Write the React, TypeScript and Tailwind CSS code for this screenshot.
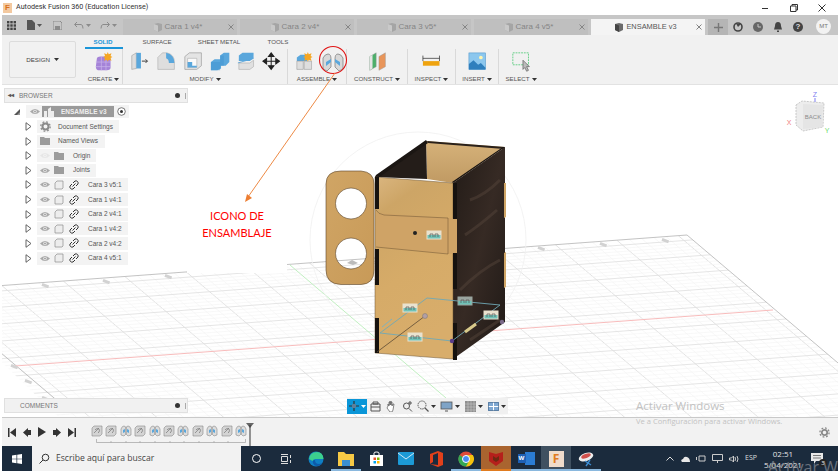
import React from "react";

const F = { fontFamily: '"Liberation Sans", Arial, sans-serif' };

function Caret({ c = "#333" }: { c?: string }) {
  return <svg width="5" height="3" viewBox="0 0 5 3" className="ml-[2px] inline-block"><path d="M0 0h5L2.500 3z" fill={c} /></svg>;
}

function Grid() {
  const lines: React.ReactNode[] = [];
  const m = 0.85;
  const s = -0.0738;
  for (let k = 0; k < 70; k++) {
    const x0 = -72 + 12.3 * k;
    const y0 = 291 + s * (x0 + 72);
    const major = (k - 1) % 5 === 0;
    lines.push(<line key={"b" + k} x1={x0} y1={y0} x2={x0 + 460} y2={y0 + 460 * m} stroke={major ? "#dcdcdc" : "#f3f3f3"} strokeWidth={major ? 0.8 : 0.6} />);
  }
  let y = 291;
  let step = 3.2;
  for (let k = 0; k < 70; k++) {
    const major = k % 5 === 0;
    lines.push(<line key={"a" + k} x1={-80} y1={y + 8 * 0.738} x2={1200} y2={y + 1200 * s} stroke={major ? "#dedede" : "#f3f3f3"} strokeWidth={major ? 0.8 : 0.6} />);
    y += step;
    step *= 1.006;
  }
  return (
    <g>
      <defs>
        <clipPath id="floor"><polygon points="-72,291 687,235 1100,585 300,650" /></clipPath>
      </defs>
      <g clipPath="url(#floor)">{lines}</g>
      <polyline points="-72,291 687,235 1100,585" fill="none" stroke="#b4b4b4" strokeWidth="0.8" />
      <line x1="-72" y1="291" x2="60" y2="403" stroke="#b4b4b4" strokeWidth="0.8" />
      <line x1="15" y1="366" x2="773" y2="310" stroke="#f8bcbc" strokeWidth="1" />
      <line x1="290" y1="265" x2="446" y2="398" stroke="#c2f0c2" strokeWidth="1" />
      {[[45, 285], [106, 281], [168, 276], [541, 248], [603, 244], [665, 240], [28, 381], [14, 366], [45, 398]].map(([x, yy], i) => (
        <rect key={i} x={x - 3} y={yy - 1} width="7" height="3" fill="#d2d2d2" transform={`rotate(20 ${x} ${yy})`} />
      ))}
    </g>
  );
}

function Label({ x, y, w = 15, dark = false }: { x: number; y: number; w?: number; dark?: boolean }) {
  return (
    <g>
      <rect x={x - w / 2} y={y - 4.500} width={w} height="9" fill={dark ? "#9aa59f" : "#e9e2cf"} />
      <rect x={x - w / 2 + 1} y={y} width={w - 2} height="3.500" fill="#6fc2b7" />
      <path d={`M${x - 4} ${y + 2}v-3h3v3M${x + 1} ${y + 2}v-3h3v3`} fill="none" stroke="#555" strokeWidth="0.700" />
    </g>
  );
}

function Model() {
  return (
    <g>
      <defs>
        <linearGradient id="wood" x1="0" y1="0" x2="0.300" y2="1">
          <stop offset="0" stopColor="#dab680" />
          <stop offset="0.200" stopColor="#cda566" />
          <stop offset="0.600" stopColor="#d6ab68" />
          <stop offset="1" stopColor="#d8ad6b" />
        </linearGradient>
        <linearGradient id="woodb" x1="0" y1="0" x2="0" y2="1">
          <stop offset="0" stopColor="#d6b27a" />
          <stop offset="1" stopColor="#c09a63" />
        </linearGradient>
        <linearGradient id="hand" x1="0" y1="0" x2="1" y2="1">
          <stop offset="0" stopColor="#d0a565" />
          <stop offset="1" stopColor="#c89a58" />
        </linearGradient>
        <linearGradient id="dark" x1="0" y1="0" x2="1" y2="1">
          <stop offset="0" stopColor="#221b17" />
          <stop offset="0.500" stopColor="#362a24" />
          <stop offset="1" stopColor="#1f1916" />
        </linearGradient>
      </defs>
      <circle cx="418" cy="240" r="108" fill="none" stroke="#f0f0f0" strokeWidth="0.800" />
      <path fillRule="evenodd" fill="url(#hand)" stroke="#5b452b" strokeWidth="0.600" d="M341 171h20q13 1 13 13v86q0 14-13 14.500h-20q-15-.5-15-14.500v-86q0-13 15-13zM351 188a15.500 15.500 0 1 0 .01 0zM351 238a15.500 15.500 0 1 0 .01 0z" />
      <path d="M352 260l6 3-5 2-6-2z" fill="#bbb" />
      <polygon points="426,141 505,147 453,183 427,179" fill="url(#woodb)" />
      <polygon points="375,177 426,141 427,179" fill="#241d19" />
      <polygon points="427,141 505,147 504,149 428,143" fill="#2a211b" />
      <polygon points="375,177 376,175 426,140 428,143 378,178" fill="#1b1613" />
      <polygon points="453,183 505,147 503,147 452,182" fill="#1b1613" />
      <polygon points="453,183 505,147 505,322 453,359" fill="url(#dark)" />
      <path d="M465 235q15-10 32-25M460 290q20-20 40-30M470 200q15-5 30-20M470 340q12-8 30-20" fill="none" stroke="#54443a" strokeWidth="3" opacity="0.5" />
      <polygon points="504,183 506,183 506,217 504,218" fill="#cfa566" />
      <polygon points="504,253 506,252 506,287 504,288" fill="#cfa566" />
      <polygon points="375,177 453,183 453,359 375,353" fill="url(#wood)" stroke="#6a5233" strokeWidth="0.500" />
      <polygon points="376,213 448,218 457,219 457,253 448,254 376,247" fill="#cfa366" />
      <path d="M376 210q2 4 8 5l64 3v36l-72-7" fill="none" stroke="#6b5232" strokeWidth="0.500" />
      <rect x="375" y="177" width="4" height="32" fill="#16120f" />
      <rect x="375" y="249" width="4" height="36" fill="#16120f" />
      <rect x="375" y="318" width="4" height="35" fill="#16120f" />
      <rect x="453" y="183" width="4" height="36" fill="#16120f" />
      <rect x="453" y="253" width="4" height="36" fill="#16120f" />
      <rect x="453" y="323" width="4" height="37" fill="#16120f" />
      <circle cx="415" cy="233" r="2" fill="#222" />
      <polygon points="380,333 427,298 500,305 452,341" fill="none" stroke="#6fa8b5" strokeWidth="0.900" />
      <line x1="377" y1="352" x2="425" y2="316" stroke="#5d4a33" strokeWidth="0.800" />
      <circle cx="425" cy="316" r="2.500" fill="#b39fa5" stroke="#777" strokeWidth="0.500" />
      <circle cx="452" cy="341" r="2.200" fill="#5a3d8a" />
      <circle cx="502" cy="322" r="2.200" fill="#7b6a8a" />
      <line x1="465" y1="332" x2="476" y2="324" stroke="#d8c98a" strokeWidth="3" />
      <Label x={434} y={235} />
      <Label x={410} y={308} />
      <Label x={415} y={337} />
      <Label x={465} y={301} dark />
      <Label x={491} y={315} />
      <line x1="382" y1="327" x2="392" y2="319" stroke="#7fb2bd" strokeWidth="1" />
    </g>
  );
}

function ViewCube() {
  return (
    <g>
      <polygon points="796,105 802,101 824,103 823,127 803,131 796,125" fill="#ededed" stroke="#bdbdbd" strokeDasharray="2 1" strokeWidth="0.800" />
      <polygon points="803,104 823,105 822,127 803,129" fill="#e5e5e5" />
      <text x="813" y="119" textAnchor="middle" fontSize="6" fill="#8b8b8b" style={F}>BACK</text>
      <line x1="815" y1="102" x2="815" y2="98" stroke="#7f7ff0" />
      <text x="815" y="97" textAnchor="middle" fontSize="7" fill="#7f7ff0" style={F}>Z</text>
      <text x="789" y="125" textAnchor="middle" fontSize="7" fill="#f08080" style={F}>X</text>
      <text x="827" y="133" textAnchor="middle" fontSize="7" fill="#6fdc6f" style={F}>Y</text>
    </g>
  );
}

const I = ({ w = 22, h = 22, children }: { w?: number; h?: number; children: React.ReactNode }) => (
  <svg width={w * 0.92} height={h * 0.92} viewBox={`0 0 ${w} ${h}`}>{children}</svg>
);
const B = "#5aa7dc";
const GR = "#dedede";

function JointIcon({ w = 26 }: { w?: number }) {
  return (
    <svg width={w} height="22" viewBox="0 0 26 22">
      <path d="M3 18V7q2-4 5-4t3 5v8l-4 4z" fill="#d8d8d8" stroke="#777" strokeWidth="0.700" />
      <path d="M23 18V7q-2-4-5-4t-3 5v8l4 4z" fill="#d8d8d8" stroke="#777" strokeWidth="0.700" />
      <path d="M6 15v-4l5-3v3zM20 15v-4l-5-3v3z" fill={B} />
    </svg>
  );
}

function Group({ label, w, children, sep = true, gap = "gap-[7px]", pad = "" }: { label: string; w: number; children: React.ReactNode; sep?: boolean; gap?: string; pad?: string }) {
  return (
    <div className={`flex flex-col items-center h-[35px] ${sep ? "border-r border-[#d9d9d9]" : ""}`} style={{ width: w }}>
      <div className={`flex items-center justify-center h-[25px] ${gap} ${pad}`}>{children}</div>
      <div className="text-[6.2px] leading-[10px] text-[#555] whitespace-nowrap">{label}<Caret /></div>
    </div>
  );
}

function Ribbon() {
  return (
    <div className="ml-[2px] mr-[2px] h-[50px] bg-[#f1f1f1] border-b border-[#e2e2e2] flex" style={F}>
      <div className="w-[83px] h-full flex items-center pl-[7px] pt-[6px] pb-[6px]">
        <div className="w-[67px] h-[37px] rounded-[2px] border border-[#dcdcdc] flex items-center justify-center text-[6.2px] text-[#444]">DESIGN&nbsp;<Caret /></div>
      </div>
      <div className="flex flex-col">
        <div className="flex h-[15px] text-[6.2px] text-[#555] text-center leading-[13px]">
          <div className="w-[38px] text-[#1b95d8] font-bold border-b-2 border-[#1b95d8] h-[14px] pr-[2px]">SOLID</div>
          <div className="w-[68px]">SURFACE</div>
          <div className="w-[56px]">SHEET METAL</div>
          <div className="w-[62px]">TOOLS</div>
        </div>
        <div className="flex items-start">
          <Group label="CREATE" w={38}>
            <I w={20}>
              <path d="M3 9q0-3 4-3h8q3 0 3 4v8q0 3-4 3H6q-4 0-4-4z" fill="#a583d8" />
              <path d="M8 6v15M13 6v15M2 12h16M2 17h16" stroke="#c9b4ea" strokeWidth="0.800" />
              <path d="M15 1l1 2.500 3-1-1 3 2 1-2 1 1 3-3-1-1 2-1-2-3 1 1-3-2-1 2-1-1-3 3 1z" fill="#f5a623" />
            </I>
          </Group>
          <Group label="MODIFY" w={165} gap="gap-[6.7px]">
            <I>
              <path d="M3 5l5-3v17l-5 1z" fill={GR} stroke="#888" strokeWidth="0.500" /><path d="M8 2h5v17H8z" fill={B} /><path d="M14 11h6M18 9l2 2-2 2" stroke="#333" fill="none" />
            </I>
            <I>
              <path d="M2 20V7l5-5h5q8 2 8 10v8z" fill={GR} stroke="#999" strokeWidth="0.500" /><path d="M11 2q9 2 9 11h-6q0-4-3-5z" fill={B} />
            </I>
            <I>
              <path d="M2 6l5-4h13v14l-5 4H2z" fill="#e4e4e4" stroke="#888" strokeWidth="0.600" /><path d="M5 8h10v10H5z" fill="#fafafa" stroke="#999" strokeWidth="0.500" /><path d="M5 12h5v4h5v2H5z" fill={B} />
            </I>
            <I>
              <path d="M1 12l4-3h6V5l4-3h6v10l-4 4h-5v3l-4 2H1z" fill={B} /><path d="M1 12h10v9H1zM11 5h4v11h-4z" fill="#3f93cf" opacity="0.500" />
            </I>
            <I w={20}>
              <path d="M2 5l4-3h12v6l-4 3H2z" fill={B} /><path d="M1 13l17-5" stroke="#5aa7dc" /><path d="M2 13h12l4-3v7l-4 3H2z" fill="#e0e0e0" stroke="#999" strokeWidth="0.500" />
            </I>
            <I w={20} h={20}>
              <path d="M10 1v18M1 10h18M10 1L7 5h6zM10 19l-3-4h6zM1 10l4-3v6zM19 10l-4-3v6z" stroke="#222" strokeWidth="1.100" fill="#222" />
            </I>
          </Group>
          <Group label="ASSEMBLE" w={59} gap="gap-[6px]" pad="pl-[7px]">
            <I w={20}>
              <path d="M2 7l4-3h7v7H2z" fill={B} /><path d="M2 11h7v9H2zM10 11h8v9h-8z" fill={GR} stroke="#888" strokeWidth="0.500" />
              <path d="M14 1l1 2.500 3-1-1 3 2 1-2 1 1 3-3-1-1 2-1-2-3 1 1-3-2-1 2-1-1-3 3 1z" fill="#f5a623" />
            </I>
            <JointIcon />
          </Group>
          <Group label="CONSTRUCT" w={61}>
            <I w={22}>
              <path d="M3 6l7-4v15l-7 4z" fill="#4caf6a" stroke="#999" strokeWidth="0.500" /><path d="M13 6l7-4v15l-7 4z" fill="#e8955a" stroke="#999" strokeWidth="0.500" />
              <path d="M3 6l3-2v15l-3 2z" fill="#e5e5e5" />
            </I>
          </Group>
          <Group label="INSPECT" w={48}>
            <I w={20}>
              <path d="M1 5v6M19 5v6M1 8h18" stroke="#333" strokeWidth="0.800" /><rect x="1" y="11" width="18" height="5" fill="#efa30f" />
            </I>
          </Group>
          <Group label="INSERT" w={43}>
            <I w={20} h={20}>
              <rect x="1" y="1" width="18" height="18" fill="#8cc7ee" stroke="#4c93c9" strokeWidth="0.600" /><circle cx="14" cy="6" r="2" fill="#fff6b0" /><path d="M1 19v-6l5-4 5 5 3-2 5 5v2z" fill="#2f7fbd" />
            </I>
          </Group>
          <Group label="SELECT" w={44} sep={false}>
            <I w={22}>
              <rect x="2" y="2" width="17" height="13" fill="none" stroke="#5fce83" strokeDasharray="2 1" /><path d="M13 10v10l2-2 2 4 2-1-2-4h3z" fill="#bbb" stroke="#555" strokeWidth="0.700" />
            </I>
          </Group>
        </div>
      </div>
    </div>
  );
}

function Tab({ name, active = false }: { name: string; active?: boolean }) {
  return (
    <div className={`w-[114px] h-[16px] flex items-center pr-[3px] ${active ? "bg-[#f4f4f4] text-[#555] text-[7.4px]" : "bg-[#bfbfbf] text-[#858585] text-[8px]"}`}>
      <div className="flex-1 flex items-center justify-center gap-[2px] pl-[4px]">
        <svg width="10" height="10" viewBox="0 0 10 10"><path d="M1 2l4-1 4 1v6l-4 2-4-2z" fill={active ? "#6b6b6b" : "#a5a5a5"} /><path d="M1 2l4 1.500V10L1 8z" fill={active ? "#444" : "#c9c9c9"} /></svg>
        <span>{name}</span>
      </div>
      <svg width="6" height="6" viewBox="0 0 6 6"><path d="M.5.5l5 5M5.500.5l-5 5" stroke={active ? "#666" : "#777"} strokeWidth="0.800" /></svg>
    </div>
  );
}

function TabBar() {
  return (
    <div className="ml-[2px] mr-[2px] h-[20px] bg-[#c6c6c6] flex items-end" style={F}>
      <div className="w-[121px] h-full flex items-center pl-[5px]">
        <svg width="9" height="9" viewBox="0 0 9 9" className="mr-[11px]">{[0, 3.300, 6.600].flatMap((x) => [0, 3.300, 6.600].map((y) => <rect key={`${x}${y}`} x={x} y={y} width="2.400" height="2.400" fill="#444" />))}</svg>
        <svg width="8" height="10" viewBox="0 0 8 10"><path d="M0 0h5l3 3v7H0z" fill="#555" /></svg>
        <Caret c="#555" />
        <svg width="9" height="9" viewBox="0 0 9 9" className="ml-[11px]"><path d="M0 0h7l2 2v7H0z" fill="none" stroke="#8b8b8b" /><rect x="2" y="5" width="5" height="4" fill="#8b8b8b" /></svg>
        <svg width="10" height="8" viewBox="0 0 10 8" className="ml-[12px]"><path d="M3 1L.5 3.500 3 6M1 3.500h6q2 0 2 4" fill="none" stroke="#8b8b8b" /></svg>
        <Caret c="#8b8b8b" />
        <svg width="10" height="8" viewBox="0 0 10 8" className="ml-[9px]"><path d="M7 1l2.500 2.500L7 6M9 3.500H3q-2 0-2 4" fill="none" stroke="#8b8b8b" /></svg>
        <Caret c="#8b8b8b" />
      </div>
      <div className="flex gap-[3px]">
        <Tab name="Cara 1 v4*" />
        <Tab name="Cara 2 v4*" />
        <Tab name="Cara 3 v5*" />
        <Tab name="Cara 4 v5*" />
        <Tab name="ENSAMBLE v3" active />
      </div>
      <div className="ml-[3px] w-[20px] h-[16px] bg-[#b5b5b5] flex items-center justify-center">
        <svg width="9" height="9" viewBox="0 0 9 9"><path d="M4.500 0v9M0 4.500h9" stroke="#777" strokeWidth="1.400" /></svg>
      </div>
      <div className="h-[17px] flex items-center gap-[10px] pl-[5px]">
        <svg width="10" height="10" viewBox="0 0 10 10"><circle cx="5" cy="5" r="4" fill="none" stroke="#444" strokeWidth="1.600" /><path d="M3 1.500L5 5l3-3z" fill="#444" /></svg>
        <svg width="10" height="10" viewBox="0 0 10 10"><circle cx="5" cy="5" r="5" fill="#666" /><path d="M5 2v3h3" stroke="#c6c6c6" fill="none" /></svg>
        <svg width="10" height="10" viewBox="0 0 10 10"><path d="M5 0q3 0 3 4l1 3.500H1L2 4q0-4 3-4zM4 8.500h2V10H4z" fill="#444" /></svg>
        <div className="w-[10px] h-[10px] rounded-full bg-[#444] text-[#ddd] text-[8px] leading-[10px] text-center font-bold">?</div>
      </div>
      <div className="h-[17px] flex items-center pl-[13px]">
        <div className="w-[15px] h-[15px] rounded-full bg-[#f2f2f2] text-[6px] leading-[15px] text-center text-[#777]">MT</div>
      </div>
    </div>
  );
}

const Eye = ({ off = false }: { off?: boolean }) => (
  <svg width="10" height="7" viewBox="0 0 10 7">
    <path d="M0 3.500Q5-1.500 10 3.500 5 8.500 0 3.500z" fill={off ? "#e6e6e6" : "#a9a9a9"} />
    <circle cx="5" cy="3.500" r="1.700" fill={off ? "#f5f5f5" : "#efefef"} />
    <circle cx="5" cy="3.500" r="0.900" fill={off ? "#e6e6e6" : "#999"} />
  </svg>
);
const Folder = () => (
  <svg width="10" height="8" viewBox="0 0 10 8"><path d="M0 0h4l1 1h5v7H0z" fill="#9c9c9c" /></svg>
);
const Tri = () => (
  <svg width="7" height="9" viewBox="0 0 7 9" className="shrink-0"><path d="M1 .700L6 4.500 1 8.300z" fill="#fff" stroke="#555" strokeWidth="0.900" /></svg>
);
const CompBox = () => (
  <svg width="10" height="10" viewBox="0 0 10 10"><path d="M1 3l2-2h6v7l-1 1H1z" fill="#ededed" stroke="#8d8d8d" strokeWidth="0.700" /></svg>
);
const LinkI = () => (
  <svg width="10" height="10" viewBox="0 0 10 10" fill="none" stroke="#333" strokeWidth="1"><path d="M4 3l2-2q1.500-.5 2.500.5T9 4L7 6" /><path d="M6 7L4 9q-1.500.5-2.500-.5T1 6l2-2" /><path d="M3.500 6.500l3-3" /></svg>
);

function Comp({ name }: { name: string }) {
  return (
    <div className="h-[14.64px] flex items-center pl-[21px]">
      <Tri />
      <div className="ml-[5px] w-[91px] h-[13px] bg-[#f3f3f3] flex items-center pl-[2px]">
        <span className="ml-[1px]"><Eye /></span>
        <span className="ml-[4px] flex"><CompBox /></span>
        <span className="ml-[5px] flex"><LinkI /></span>
        <span className="ml-[9px] text-[6.5px] text-[#555] whitespace-nowrap">{name}</span>
      </div>
    </div>
  );
}

function Named({ w, name, icon, tx }: { w: number; name: string; icon: React.ReactNode; tx: number }) {
  return (
    <div className="h-[14.64px] flex items-center pl-[21px]">
      <Tri />
      <div className="ml-[5px] h-[13px] bg-[#f3f3f3] flex items-center text-[6.5px] text-[#555] whitespace-nowrap" style={{ width: w }}>
        <div className="flex items-center pl-[3px]" style={{ width: tx }}>{icon}</div>
        <span>{name}</span>
      </div>
    </div>
  );
}

function Browser() {
  return (
    <div className="absolute left-[2px] top-[3px] w-[184px]" style={F}>
      <div className="h-[15px] bg-[#f1f1f1] border border-[#e0e0e0] flex items-center pl-[3px] pr-[1px] text-[6.5px] text-[#777]">
        <span className="text-[6px] text-[#555] mr-[5px] font-bold">◂◂</span>
        <span>BROWSER</span>
        <span className="flex-1" />
        <span className="w-[5px] h-[5px] rounded-full bg-[#333] mr-[5px]" />
        <span className="w-[1px] h-[6px] bg-[#aaa]" />
      </div>
      <div className="mt-[1.500px]">
        <div className="h-[14.64px] flex items-center pl-[9px]">
          <svg width="8" height="8" viewBox="0 0 8 8" className="mr-[5px]"><path d="M7 1v6H1z" fill="#555" /><path d="M7 4v3H4z" fill="#999" /></svg>
          <div className="h-[13px] w-[103px] bg-[#f3f3f3] flex items-center">
            <span className="ml-[4px]"><Eye /></span>
            <div className="ml-[2px] w-[72px] h-[11px] bg-[#9a9a9a] flex items-center">
              <svg width="11" height="10" viewBox="0 0 11 10" className="ml-[1px]"><path d="M1 4h3v6H1zM5 10V2l3-2v4h3v6z" fill="#eee" /></svg>
              <span className="ml-[7px] text-[6.5px] font-bold text-[#eee] whitespace-nowrap">ENSAMBLE v3</span>
            </div>
            <svg width="9" height="9" viewBox="0 0 9 9" className="ml-[3px]"><circle cx="4.500" cy="4.500" r="3.800" fill="#fff" stroke="#444" strokeWidth="0.700" /><circle cx="4.500" cy="4.500" r="1.500" fill="#333" /></svg>
          </div>
        </div>
        <Named w={82} tx={21} name="Document Settings" icon={<svg width="11" height="11" viewBox="0 0 11 11"><circle cx="5.500" cy="5.500" r="3" fill="none" stroke="#8a8a8a" strokeWidth="2" /><circle cx="5.500" cy="5.500" r="4.700" fill="none" stroke="#8a8a8a" strokeWidth="1.300" strokeDasharray="1.800 1.900" /></svg>} />
        <Named w={68} tx={21} name="Named Views" icon={<Folder />} />
        <Named w={59} tx={36} name="Origin" icon={<><Eye off /><span className="ml-[4px] flex"><Folder /></span></>} />
        <Named w={59} tx={36} name="Joints" icon={<><Eye /><span className="ml-[4px] flex"><Folder /></span></>} />
        {["Cara 3 v5:1", "Cara 1 v4:1", "Cara 2 v4:1", "Cara 1 v4:2", "Cara 2 v4:2", "Cara 4 v5:1"].map((n, i) => <Comp key={i} name={n} />)}
      </div>
    </div>
  );
}

function NavBar() {
  const c = "#555";
  return (
    <div className="absolute left-[345px] top-[313px] h-[16px] flex items-center bg-[#f0f0f0] pr-[2px]" style={F}>
      <div className="w-[20px] h-[15px] bg-[#0a96d8] flex items-center justify-center">
        <svg width="10" height="10" viewBox="0 0 10 10"><path d="M5 0v10M0 5h10" stroke="#333" strokeWidth="1.200" /><path d="M3 3h4v4H3z" fill="#5b7f9b" /></svg>
        <Caret c="#fff" />
      </div>
      <svg width="11" height="11" viewBox="0 0 11 11" className="ml-[3px]"><path d="M1 3h9v7H1zM3 1h5v2H3zM1 6h9" fill="none" stroke={c} /></svg>
      <svg width="11" height="11" viewBox="0 0 11 11" className="ml-[5px]"><path d="M2 5V3l1 2V1h1v3V0h1v4V1h1v4l1-2h1l-1 6-1 2H4L1 7z" fill="#fff" stroke={c} strokeWidth="0.700" /></svg>
      <svg width="11" height="11" viewBox="0 0 11 11" className="ml-[5px]"><circle cx="4.500" cy="5" r="3" fill="none" stroke={c} /><path d="M7 7.500l3 3M8 0v4M6 2h4" stroke={c} /></svg>
      <svg width="12" height="12" viewBox="0 0 12 12" className="ml-[4px]"><circle cx="5" cy="5" r="4" fill="none" stroke={c} strokeDasharray="1.500 .7" /><path d="M8 8l3.500 3.500" stroke={c} strokeWidth="1.200" /></svg>
      <Caret />
      <svg width="13" height="11" viewBox="0 0 13 11" className="ml-[4px]"><rect x="1" y="1" width="11" height="7" fill="#7fa4c7" stroke={c} strokeWidth="0.800" /><path d="M5 10h3" stroke={c} /></svg>
      <Caret />
      <svg width="11" height="11" viewBox="0 0 11 11" className="ml-[5px]"><path d="M0 0h11v11H0z" fill="#8e8e8e" /><path d="M0 3h11M0 6h11M0 9h11M3 0v11M6 0v11M9 0v11" stroke="#ccc" strokeWidth="0.500" /></svg>
      <Caret />
      <svg width="11" height="9" viewBox="0 0 11 9" className="ml-[5px]"><path d="M0 0h11v9H0z" fill="#7fa8d2" /><path d="M5.500 0v9M0 4.500h11" stroke="#fff" /><path d="M.5.500h10v8H.5z" fill="none" stroke="#4e6f92" strokeWidth="0.700" /></svg>
      <Caret />
    </div>
  );
}

function Viewport() {
  return (
    <div className="relative ml-[2px] mr-[2px] h-[332px] bg-white overflow-hidden">
      <svg width="840" height="332" viewBox="2 85 840 332" className="absolute left-0 top-0">
        <Grid />
        <ViewCube />
        <Model />
      </svg>
      <div className="absolute left-[185px] top-[118px] w-[100px] h-[70px] bg-white text-center text-[11px] leading-[17px] text-[#ff0000] pt-[4px]" style={{ fontFamily: 'Lato, "Liberation Sans", sans-serif' }}>
        ICONO DE<br />ENSAMBLAJE
      </div>
      <Browser />
      <div className="absolute left-[2px] top-[313px] w-[184px] h-[15px] bg-[#f1f1f1] border border-[#e0e0e0] flex items-center pl-[15px] pr-[1px] text-[6.5px] text-[#777]" style={F}>
        <span>COMMENTS</span>
        <span className="flex-1" />
        <span className="w-[5px] h-[5px] rounded-full bg-[#333] mr-[5px]" />
        <span className="w-[1px] h-[6px] bg-[#aaa]" />
      </div>
      <NavBar />
    </div>
  );
}

function TLIcon({ j }: { j: boolean }) {
  return j ? (
    <svg width="12" height="12" viewBox="0 0 12 12"><path d="M1 10V4q1-3 3-3t2 3v5L4 11zM11 10V4q-1-3-3-3T6 4v5l2 2z" fill="#ddd" stroke="#888" strokeWidth="0.600" /><path d="M3 8V5l2-1v3zM9 8V5L7 4v3z" fill={B} /></svg>
  ) : (
    <svg width="12" height="12" viewBox="0 0 12 12"><path d="M3 1h8v8l-2 2H1V3z" fill="#d4d4d4" stroke="#888" strokeWidth="0.600" /><path d="M3 8l5-5M4 5l1-1q2-1 3 0t0 3L7 8" stroke="#777" fill="none" strokeWidth="0.700" /></svg>
  );
}

function Timeline() {
  const k = "#333";
  const seq = [false, false, true, false, true, false, true, false, true, false, true];
  return (
    <div className="relative ml-[2px] mr-[2px] h-[29px] bg-[#f2f2f2] border-t border-[#c9c9c9] flex items-center pl-[6px]">
      <div className="flex items-center gap-[7px] w-[83px]">
        <svg width="8" height="9" viewBox="0 0 8 9"><path d="M0 0h1.500v9H0zM8 0v9L2 4.500z" fill={k} /></svg>
        <svg width="8" height="9" viewBox="0 0 8 9"><path d="M5 0v9L0 4.500zM5 2h3v5H5z" fill={k} /></svg>
        <svg width="8" height="10" viewBox="0 0 8 10"><path d="M0 0l8 5-8 5z" fill={k} /></svg>
        <svg width="8" height="9" viewBox="0 0 8 9"><path d="M3 0v9l5-4.500zM0 2h3v5H0z" fill={k} /></svg>
        <svg width="8" height="9" viewBox="0 0 8 9"><path d="M0 0v9l6-4.500zM6.500 0H8v9H6.500z" fill={k} /></svg>
      </div>
      <div className="flex flex-col mt-[3px]">
        <div className="flex gap-[2.400px]">{seq.map((j, i) => <TLIcon key={i} j={j} />)}</div>
        <svg width="156" height="4" viewBox="0 0 156 4" className="mt-[2px]"><path d="M5.500 0v3.500h149V0M20 2v2M35 2v2M49 2v2M64 2v2M79 2v2M93 2v2M108 2v2M123 2v2M137 2v2" fill="none" stroke="#aaa" strokeWidth="0.800" /></svg>
      </div>
      <svg width="8" height="28" viewBox="0 0 8 28" className="-ml-[1px]"><path d="M0 5h8L4 10z" fill="#666" /><path d="M4 7v21" stroke="#333" /></svg>
      <span className="flex-1" />
      <svg width="11" height="11" viewBox="0 0 11 11" className="mr-[8px]"><circle cx="5.500" cy="5.500" r="2.700" fill="none" stroke="#8a8a8a" strokeWidth="1.800" /><circle cx="5.500" cy="5.500" r="4.600" fill="none" stroke="#8a8a8a" strokeWidth="1.300" strokeDasharray="1.800 1.800" /></svg>
    </div>
  );
}

function Slot({ children, bg = "", line = "" }: { children: React.ReactNode; bg?: string; line?: string }) {
  return (
    <div className={`relative w-[30px] h-full flex items-center justify-center ${bg}`}>
      {children}
      {line && <div className={`absolute left-0 right-0 bottom-0 h-[2px] ${line}`} />}
    </div>
  );
}

function Taskbar() {
  return (
    <div className="relative ml-[2px] mr-[2px] h-[25px] bg-[#1b2b3d] flex items-center overflow-hidden" style={{ fontFamily: '"Open Sans", sans-serif' }}>
      <div className="w-[30px] flex justify-center">
        <svg width="10" height="10" viewBox="0 0 10 10"><path d="M0 1.500L4.500.8v3.900H0zM5.200.7L10 0v4.700H5.200zM0 5.300h4.500v3.900L0 8.500zM5.200 5.300H10V10l-4.800-.7z" fill="#fff" /></svg>
      </div>
      <div className="w-[209px] h-full bg-[#f2f2f2] flex items-center pl-[7px] text-[8.600px] text-[#444]">
        <svg width="11" height="11" viewBox="0 0 11 11" fill="none" stroke="#333"><circle cx="6.500" cy="4.500" r="3.300" /><path d="M4 7l-3.500 3.500" /></svg>
        <span className="ml-[6px] whitespace-nowrap">Escribe aquí para buscar</span>
      </div>
      <Slot><span className="w-[9px] h-[9px] rounded-full border-[1.500px] border-white" /></Slot>
      <Slot>
        <svg width="11" height="10" viewBox="0 0 11 10" fill="none" stroke="#ddd"><path d="M.5 2.500h6v5h-6zM0 .5h7M0 9.500h7M9.500 1v3M9.500 6v3" /></svg>
      </Slot>
      <Slot>
        <svg width="16" height="16" viewBox="0 0 16 16"><circle cx="8" cy="8" r="7.500" fill="#0f7fc4" /><path d="M1 8q1-7 8-7 6 0 6.500 7h-8q-2 0-3 2" fill="#3ccf8e" /><path d="M7 9q0 4 4 4 3 0 4-2-2 4-6 4-3 0-4-3t2-3z" fill="#0d5aa8" /></svg>
      </Slot>
      <Slot line="bg-[#8ab8de]">
        <svg width="16" height="14" viewBox="0 0 16 14"><path d="M0 0h6l2 2h8v12H0z" fill="#f6c945" /><rect x="4" y="8" width="8" height="6" fill="#3a8fd1" /></svg>
      </Slot>
      <Slot>
        <svg width="15" height="15" viewBox="0 0 15 15"><path d="M1 4h13v11H1z" fill="#fff" /><path d="M5 4V2q0-1 2.500-1T10 2v2" stroke="#fff" fill="none" /><rect x="4.500" y="6.500" width="2.500" height="2.500" fill="#e8502a" /><rect x="8" y="6.500" width="2.500" height="2.500" fill="#7fba00" /><rect x="4.500" y="10" width="2.500" height="2.500" fill="#00a4ef" /><rect x="8" y="10" width="2.500" height="2.500" fill="#ffb900" /></svg>
      </Slot>
      <Slot>
        <svg width="16" height="13" viewBox="0 0 16 13"><rect width="16" height="13" rx="1" fill="#1c9ad6" /><path d="M0 1l8 6 8-6" stroke="#cfeaf7" fill="none" /></svg>
      </Slot>
      <Slot>
        <svg width="13" height="16" viewBox="0 0 13 16"><path d="M8 0l5 2v12l-5 2-8-3 8 1V2L3 4v7l-3 2V3z" fill="#e2401b" /></svg>
      </Slot>
      <Slot line="bg-[#8ab8de]">
        <svg width="16" height="16" viewBox="0 0 16 16"><circle cx="8" cy="8" r="7.500" fill="#e04a3a" /><path d="M8 4h6.800A7.500 7.500 0 0 1 8 15.500z" fill="#f4c20d" /><path d="M1.500 4A7.500 7.500 0 0 0 8 15.500L11 10z" fill="#34a853" /><circle cx="8" cy="8" r="3.500" fill="#4a8bf5" stroke="#fff" /></svg>
      </Slot>
      <Slot bg="bg-[#a9642f]" line="bg-[#e07b1f]">
        <svg width="14" height="15" viewBox="0 0 14 15"><path d="M0 1l7 2 7-2v9l-7 5-7-5z" fill="#b5201b" /><path d="M4 5l3 2 3-2v4L7 11 4 9z" fill="#6e2a12" /></svg>
      </Slot>
      <Slot line="bg-[#8ab8de]">
        <div className="flex items-center">
          <div className="w-[8px] h-[9px] bg-[#1d5fb4] text-white text-[6px] leading-[9px] text-center font-bold z-10 -mr-[1px]">W</div>
          <div className="w-[10px] h-[13px] bg-[#2b7cd3]" />
        </div>
      </Slot>
      <Slot bg="bg-[#3f5060]" line="bg-[#8ab8de]">
        <div className="w-[15px] h-[16px] bg-[#f0dccb] text-[#e07b20] text-[12px] leading-[16px] text-center font-bold">F</div>
      </Slot>
      <Slot line="bg-[#8ab8de]">
        <svg width="16" height="16" viewBox="0 0 16 16"><ellipse cx="8" cy="6" rx="7.500" ry="4" fill="#eee" transform="rotate(-20 8 6)" /><ellipse cx="8" cy="5" rx="5" ry="2" fill="#d0504c" transform="rotate(-20 8 5)" /><path d="M7 10l6 4M12 9l-4 6" stroke="#3c8bd0" strokeWidth="1.400" /></svg>
      </Slot>
      <span className="flex-1" />
      <div className="flex items-center gap-[6px] text-[#ddd]">
        <svg width="8" height="5" viewBox="0 0 8 5" fill="none" stroke="#ddd"><path d="M.5 4.500L4 1l3.500 3.500" /></svg>
        <svg width="10" height="6" viewBox="0 0 10 6"><path d="M2 6q-2-2 1-3 1-3 4-2 3 1 3 5z" fill="#e8e8e8" /></svg>
        <svg width="10" height="8" viewBox="0 0 10 8" fill="none" stroke="#ccc"><path d="M3 1h6v5H3zM.5 2v3" /></svg>
        <svg width="11" height="9" viewBox="0 0 11 9" fill="none" stroke="#ccc"><path d="M.5.5h10v6h-10zM5.500 7v2" /></svg>
        <svg width="10" height="8" viewBox="0 0 10 8" fill="none" stroke="#ccc"><path d="M.5 3v2h2l2 2V1l-2 2zM6 2q1 2 0 4M8 1q2 3 0 6" /></svg>
        <span className="text-[7px]">ESP</span>
        <div className="-ml-[5px] w-[50px] text-center leading-[11px] text-[8px] text-[#e5e5e5]">02:51<br /><span className="whitespace-nowrap">5/04/2021</span></div>
        <div className="-ml-[3px] mr-[15px] relative">
          <svg width="12" height="11" viewBox="0 0 12 11"><path d="M0 0h12v8H5l-2 3V8H0z" fill="#e8e8e8" /><path d="M2 2.500h8M2 5h8" stroke="#777" /></svg>
          <span className="absolute -right-[4px] -bottom-[3px] w-[8px] h-[8px] rounded-full bg-[#222] text-[6px] leading-[8px] text-center text-white">3</span>
        </div>
      </div>
      <span className="absolute left-[766px] top-[6px] text-[16px] leading-[30px] text-[#8b8f96] opacity-70 whitespace-nowrap">Activar W</span>
    </div>
  );
}

export default function App() {
  return (
    <div className="relative w-[840px] h-[471px] bg-white overflow-hidden">
      <div className="h-[15px] flex items-center pl-[3px] bg-white">
        <div className="w-[9px] h-[10px] bg-[#f3c9a0] text-[#d9711c] text-[8px] leading-[10px] text-center font-bold" style={F}>F</div>
        <span className="ml-[4px] text-[7.2px] text-[#333] whitespace-nowrap" style={{ fontFamily: 'Roboto, sans-serif' }}>Autodesk Fusion 360 (Education License)</span>
        <span className="flex-1" />
        <svg width="8" height="8" viewBox="0 0 8 8" className="mr-[21px]"><path d="M1 4.500h6" stroke="#333" /></svg>
        <svg width="8" height="8" viewBox="0 0 8 8" fill="none" stroke="#333" className="mr-[20px]"><path d="M.5 2h5.500v5.500H.5zM2 2V.5h5.500V6H6" /></svg>
        <svg width="8" height="8" viewBox="0 0 8 8" className="mr-[14px]"><path d="M.5.5l7 7M7.500.5l-7 7" stroke="#333" /></svg>
      </div>
      <TabBar />
      <Ribbon />
      <Viewport />
      <Timeline />
      <Taskbar />
      <svg width="840" height="471" viewBox="0 0 840 471" className="absolute left-0 top-0 pointer-events-none">
        <circle cx="333" cy="60" r="13.500" fill="none" stroke="#e01515" strokeWidth="1.100" />
        <line x1="335" y1="73" x2="248" y2="197" stroke="#ed8a45" strokeWidth="1" />
        <path d="M245 202l2-8 5 4z" fill="#ed7d31" />
      </svg>
      <div className="absolute left-[636px] top-[398px] text-[#c2c2c2] pointer-events-none whitespace-nowrap" style={{ fontFamily: '"Open Sans", sans-serif' }}>
        <div className="text-[11.500px] leading-[16px]">Activar Windows</div>
        <div className="text-[7.600px] leading-[12px] mt-[1px]">Ve a Configuración para activar Windows.</div>
      </div>
    </div>
  );
}
